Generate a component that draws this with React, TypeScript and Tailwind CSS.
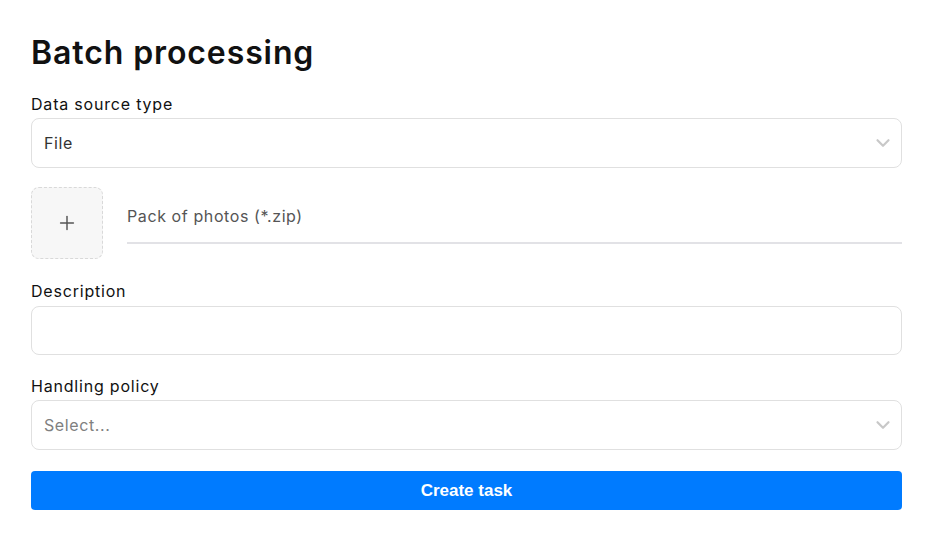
import { ChevronDown, Plus } from "lucide-react";

function SelectBox({ value, placeholder }: { value?: string; placeholder?: string }) {
  return (
    <div className="flex h-[50px] items-center justify-between rounded-lg border border-[#e0e0e0] bg-white pl-[12px] pr-[7px]">
      {value ? (
        <span className="text-[16px] tracking-[0.6px] text-[#333]">{value}</span>
      ) : (
        <span className="text-[16px] tracking-[0.6px] text-[#808080]">{placeholder}</span>
      )}
      <ChevronDown className="h-[22px] w-[22px] text-[#c8c8c8]" strokeWidth={2.4} />
    </div>
  );
}

export default function App() {
  return (
    <div className="min-h-[545px] bg-white pl-[31px] pr-[43px] pt-[33px] font-['Inter',sans-serif] text-[#111]">
      <h1 className="text-[32px] font-semibold leading-[40px] tracking-[0.9px]">Batch processing</h1>

      <div className="mt-[19px]">
        <label className="block text-[16px] leading-[24px] tracking-[0.8px]">Data source type</label>
        <div className="mt-[2px]">
          <SelectBox value="File" />
        </div>
      </div>

      <div className="mt-[19px] flex items-start gap-[24px]">
        <button className="flex h-[72px] w-[72px] shrink-0 items-center justify-center rounded-lg border border-dashed border-[#d9d9d9] bg-[#f7f7f7]">
          <Plus className="h-[22px] w-[22px] text-[#555]" strokeWidth={1.6} />
        </button>
        <div className="flex-1 border-b-2 border-[#e2e2e6] pb-[14px] pt-[17px]">
          <span className="text-[16px] tracking-[0.6px] text-[#555]">Pack of photos (*.zip)</span>
        </div>
      </div>

      <div className="mt-[20px]">
        <label className="block text-[16px] leading-[24px] tracking-[0.8px]">Description</label>
        <div className="mt-[3px] h-[49px] rounded-lg border border-[#e0e0e0] bg-white" />
      </div>

      <div className="mt-[19px]">
        <label className="block text-[16px] leading-[24px] tracking-[0.8px]">Handling policy</label>
        <div className="mt-[2px]">
          <SelectBox placeholder="Select..." />
        </div>
      </div>

      <button className="mt-[21px] flex h-[39px] w-full items-center justify-center rounded-[4px] bg-[#007bff] font-['Liberation_Sans',sans-serif] text-[17px] font-bold text-white">
        Create task
      </button>
    </div>
  );
}
